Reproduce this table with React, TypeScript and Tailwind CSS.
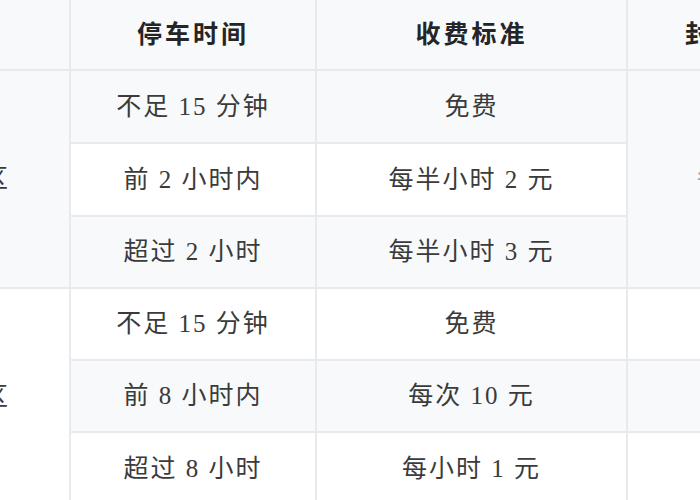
import * as React from "react";

type Row = { time: string; fee: string; shade: boolean };

const groups: { zone: string; cap: string; shadeZone: boolean; rows: Row[] }[] = [
  {
    zone: "区",
    cap: "每日封顶",
    shadeZone: true,
    rows: [
      { time: "不足 15 分钟", fee: "免费", shade: true },
      { time: "前 2 小时内", fee: "每半小时 2 元", shade: false },
      { time: "超过 2 小时", fee: "每半小时 3 元", shade: true },
    ],
  },
  {
    zone: "区",
    cap: "",
    shadeZone: false,
    rows: [
      { time: "不足 15 分钟", fee: "免费", shade: false },
      { time: "前 8 小时内", fee: "每次 10 元", shade: true },
      { time: "超过 8 小时", fee: "每小时 1 元", shade: false },
    ],
  },
];

function Cell({
  shade,
  className = "",
  children,
}: {
  shade: boolean;
  className?: string;
  children?: React.ReactNode;
}): React.ReactElement {
  return (
    <div
      className={`flex items-center overflow-hidden whitespace-nowrap ${
        shade ? "bg-[#f8f9fb]" : "bg-white"
      } ${className}`}
    >
      {children}
    </div>
  );
}

export default function App(): React.ReactElement {
  return (
    <div className="h-[500px] w-[700px] overflow-hidden bg-white font-['Liberation_Serif','Noto_Sans_CJK_SC',serif] text-[25px] tracking-[2px] text-[#3b3b3b]">
      <div className="grid w-[860px] grid-cols-[69px_244px_309px_230px] grid-rows-[69px_71px_71px_70px_70px_70px_71px] gap-[2px] bg-[#e8eaee]">
        {/* header */}
        <Cell shade className="justify-end" />
        <Cell shade className="justify-center font-bold tracking-[3px] text-[#252525]">
          停车时间
        </Cell>
        <Cell shade className="justify-center font-bold tracking-[3px] text-[#252525]">
          收费标准
        </Cell>
        <Cell shade className="pl-[57px] font-bold tracking-[3px] text-[#252525]">
          封顶价格
        </Cell>

        {groups.map((g, gi) => (
          <React.Fragment key={gi}>
            {g.rows.map((r, ri) => (
              <React.Fragment key={ri}>
                {ri === 0 ? (
                  <Cell shade={g.shadeZone} className="row-span-3 justify-start">
                    <span className="-ml-[17px]">{g.zone}</span>
                  </Cell>
                ) : null}
                <Cell shade={r.shade} className="justify-center">
                  {r.time}
                </Cell>
                <Cell shade={r.shade} className="justify-center">
                  {r.fee}
                </Cell>
                {gi === 0 ? (
                  ri === 0 ? (
                    <Cell shade className="row-span-3 pl-[69px] text-[#a0a0a0]">
                      {g.cap}
                    </Cell>
                  ) : null
                ) : (
                  <Cell shade={r.shade} />
                )}
              </React.Fragment>
            ))}
          </React.Fragment>
        ))}
      </div>
    </div>
  );
}
